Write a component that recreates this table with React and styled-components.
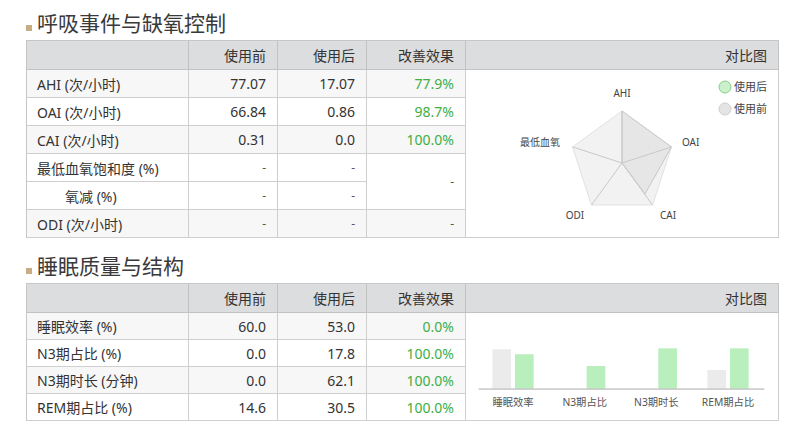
import React from 'react';
import styled, { createGlobalStyle } from 'styled-components';

const GlobalStyle = createGlobalStyle`
  body {
    margin: 0;
    background: #fff;
    font-family: "Noto Sans", "Noto Sans CJK SC", sans-serif;
    color: #333;
  }
`;

const Page = styled.div`
  width: 800px;
  height: 431px;
  padding-left: 26px;
  box-sizing: border-box;
  overflow: hidden;
`;

const Title = styled.h2`
  margin: 0;
  height: ${(p) => p.$height}px;
  display: flex;
  align-items: flex-end;
  padding-bottom: 4px;
  box-sizing: border-box;
  font-size: 21px;
  line-height: 26px;
  font-weight: 400;
  color: #3a3a3a;

  &:before {
    content: '';
    display: block;
    width: 6px;
    height: 6px;
    margin: 0 5px 5px 0;
    background: #c9ad82;
  }
`;

const Table = styled.div`
  width: 752px;
  display: grid;
  grid-template-columns: 162px 89px 89px 99px 1fr;
  grid-template-rows: 29px repeat(${(p) => p.$rows}, ${(p) => p.$rowHeight}px);
  border-top: 1px solid #c6c6c6;
  border-left: 1px solid #c6c6c6;
`;

const Cell = styled.div`
  box-sizing: border-box;
  display: flex;
  align-items: center;
  justify-content: ${(p) => (p.$left ? 'flex-start' : 'flex-end')};
  padding: 0 11px 0 ${(p) => (p.$indent ? 38 : 10)}px;
  border-right: 1px solid #cfcfcf;
  border-bottom: 1px solid #cfcfcf;
  font-size: 14px;
  white-space: nowrap;
  background: ${(p) => (p.$shade ? '#f7f7f7' : '#fff')};
  color: ${(p) => (p.$green ? '#3fae45' : '#333')};
  grid-row: ${(p) => (p.$span ? `span ${p.$span}` : 'auto')};
`;

const HeadCell = styled(Cell)`
  background: #dcdddf;
  border-right-color: #c2c2c2;
  border-bottom-color: #c2c2c2;
`;

const Dash = styled.span`
  font-size: 12px;
  color: #555;
`;

const ChartCell = styled.div`
  grid-column: 5;
  grid-row: span ${(p) => p.$span};
  border-right: 1px solid #cfcfcf;
  border-bottom: 1px solid #cfcfcf;
  background: #fff;
  position: relative;

  svg {
    display: block;
    width: 100%;
    height: 100%;
  }
`;

const val = (v) => (v === '-' ? <Dash>-</Dash> : v);

const pentagon = (r, cx = 156, cy = 93) =>
  [0, 1, 2, 3, 4].map((k) => {
    const a = ((-90 + 72 * k) * Math.PI) / 180;
    return [cx + r * Math.cos(a), cy + r * Math.sin(a)];
  });

const RadarChart = () => {
  const outer = pentagon(52);
  const pts = (arr) => arr.map((p) => p.join(',')).join(' ');
  const before = [outer[0], outer[1], [179, 124], [156, 93], [156, 93]];
  return (
    <svg viewBox="0 0 312 167">
      <polygon points={pts(outer)} fill="#f2f2f2" stroke="#e2e2e2" />
      <polygon points={pts(before)} fill="#e6e6e6" stroke="#c8c8c8" />
      {outer.map(([x, y], i) => (
        <line key={i} x1="156" y1="93" x2={x} y2={y} stroke="#c9c9c9" />
      ))}
      <g fontSize="10" fill="#444" fontFamily="Noto Sans, Noto Sans CJK SC, sans-serif">
        <text x="156" y="27" textAnchor="middle">AHI</text>
        <text x="216" y="76">OAI</text>
        <text x="202" y="149" textAnchor="middle">CAI</text>
        <text x="109" y="149" textAnchor="middle">ODI</text>
        <text x="94" y="76" textAnchor="end">最低血氧</text>
      </g>
      <circle cx="259" cy="17" r="6" fill="#cbf0cb" stroke="#86d086" />
      <circle cx="259" cy="39" r="6" fill="#e4e4e4" stroke="#cdcdcd" />
      <g fontSize="11" fill="#444" fontFamily="Noto Sans CJK SC, sans-serif">
        <text x="268" y="21">使用后</text>
        <text x="268" y="43">使用前</text>
      </g>
    </svg>
  );
};

const bars = [
  { label: '睡眠效率', x: 45, before: 40, after: 35 },
  { label: 'N3期占比', x: 118, before: 0, after: 23 },
  { label: 'N3期时长', x: 191, before: 0, after: 41 },
  { label: 'REM期占比', x: 264, before: 19, after: 41 },
];

const BarChart = () => (
  <svg viewBox="0 0 312 109">
    {bars.map((b) => (
      <g key={b.label}>
        {b.before > 0 && (
          <rect x={b.x - 21} y={77 - b.before} width="19" height={b.before} fill="#ebebeb" />
        )}
        <rect x={b.x + 2} y={77 - b.after} width="19" height={b.after} fill="#b9efbd" />
        <text
          x={b.x}
          y="95"
          textAnchor="middle"
          fontSize="10.5"
          fill="#555"
          fontFamily="Noto Sans, Noto Sans CJK SC, sans-serif"
        >
          {b.label}
        </text>
      </g>
    ))}
    <line x1="10" y1="77.5" x2="301" y2="77.5" stroke="#a8a8a8" />
  </svg>
);

const Header = () => (
  <>
    <HeadCell />
    <HeadCell>使用前</HeadCell>
    <HeadCell>使用后</HeadCell>
    <HeadCell>改善效果</HeadCell>
    <HeadCell>对比图</HeadCell>
  </>
);

const respRows = [
  { label: 'AHI (次/小时)', before: '77.07', after: '17.07', effect: '77.9%', shade: true },
  { label: 'OAI (次/小时)', before: '66.84', after: '0.86', effect: '98.7%' },
  { label: 'CAI (次/小时)', before: '0.31', after: '0.0', effect: '100.0%', shade: true },
];

const sleepRows = [
  { label: '睡眠效率 (%)', before: '60.0', after: '53.0', effect: '0.0%', shade: true },
  { label: 'N3期占比 (%)', before: '0.0', after: '17.8', effect: '100.0%' },
  { label: 'N3期时长 (分钟)', before: '0.0', after: '62.1', effect: '100.0%', shade: true },
  { label: 'REM期占比 (%)', before: '14.6', after: '30.5', effect: '100.0%' },
];

const DataRow = ({ row, chart }) => (
  <>
    <Cell $left $shade={row.shade}>{row.label}</Cell>
    <Cell $shade={row.shade}>{row.before}</Cell>
    <Cell $shade={row.shade}>{row.after}</Cell>
    <Cell $shade={row.shade} $green>{row.effect}</Cell>
    {chart}
  </>
);

export default function App() {
  return (
    <Page>
      <GlobalStyle />
      <Title $height={40}>呼吸事件与缺氧控制</Title>
      <Table $rows={6} $rowHeight={28}>
        <Header />
        {respRows.map((row, i) => (
          <DataRow
            key={row.label}
            row={row}
            chart={
              i === 0 && (
                <ChartCell $span={6}>
                  <RadarChart />
                </ChartCell>
              )
            }
          />
        ))}
        <Cell $left>最低血氧饱和度 (%)</Cell>
        <Cell>{val('-')}</Cell>
        <Cell>{val('-')}</Cell>
        <Cell $span={2}>{val('-')}</Cell>
        <Cell $left $indent>氧减 (%)</Cell>
        <Cell>{val('-')}</Cell>
        <Cell>{val('-')}</Cell>
        <Cell $left $shade>ODI (次/小时)</Cell>
        <Cell $shade>{val('-')}</Cell>
        <Cell $shade>{val('-')}</Cell>
        <Cell $shade>{val('-')}</Cell>
      </Table>
      <Title $height={45}>睡眠质量与结构</Title>
      <Table $rows={4} $rowHeight={27}>
        <Header />
        {sleepRows.map((row, i) => (
          <DataRow
            key={row.label}
            row={row}
            chart={
              i === 0 && (
                <ChartCell $span={4}>
                  <BarChart />
                </ChartCell>
              )
            }
          />
        ))}
      </Table>
    </Page>
  );
}
